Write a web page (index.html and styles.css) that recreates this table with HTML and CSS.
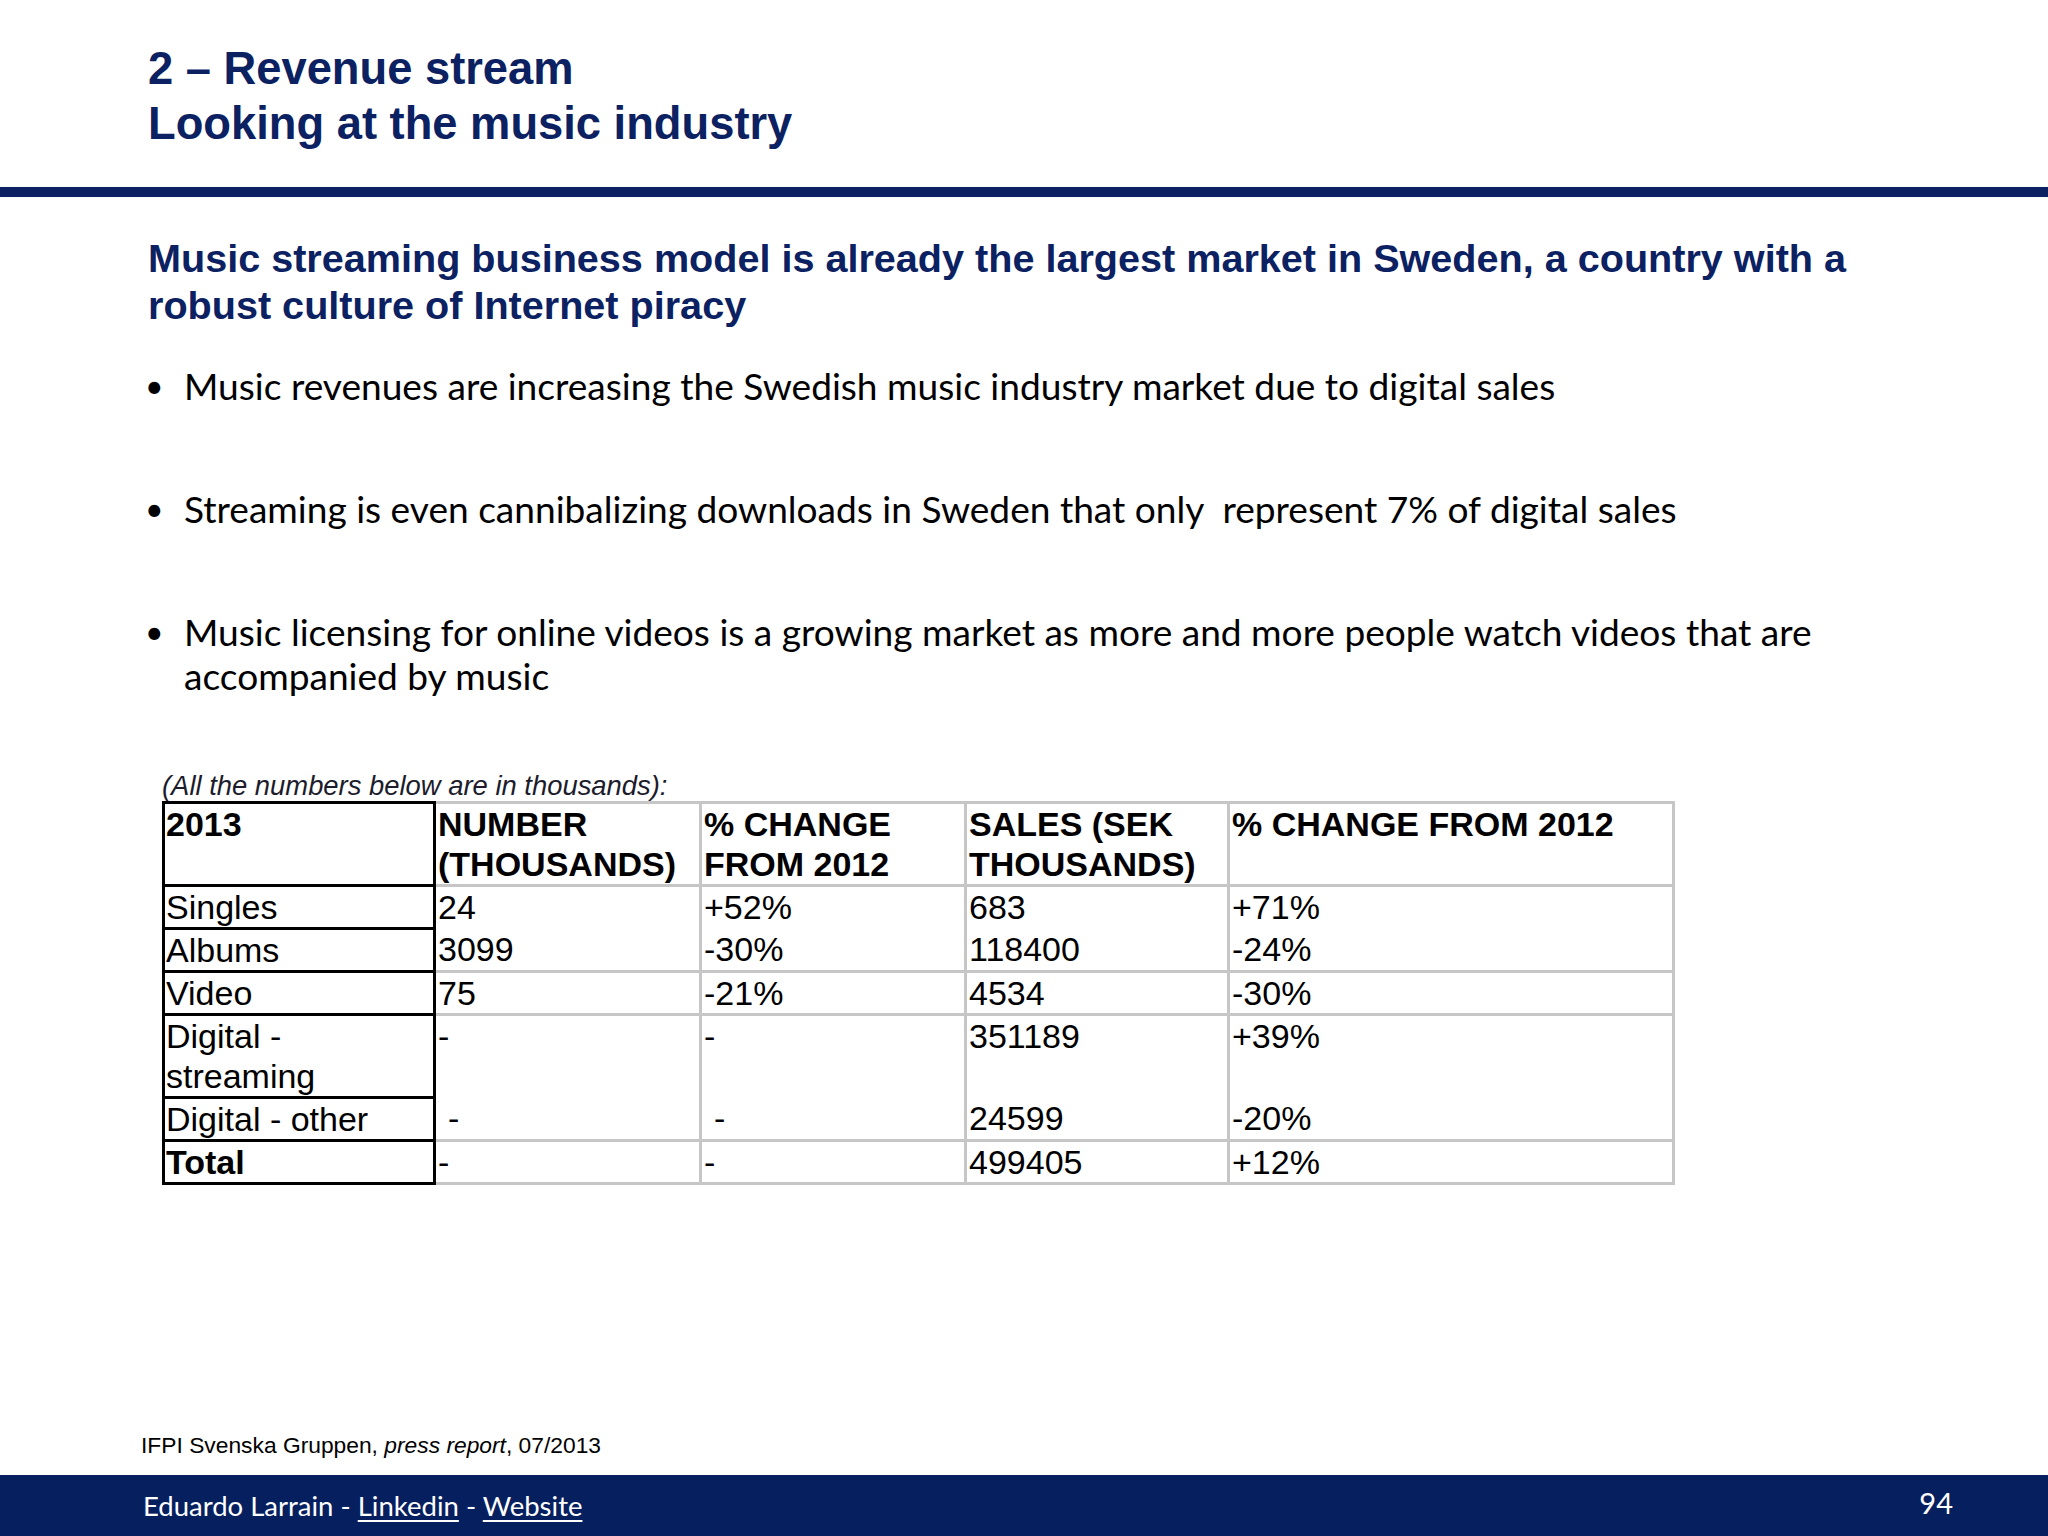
FILE: index.html
```html
<!DOCTYPE html>
<html lang="en">
<head>
<meta charset="utf-8">
<title>2 – Revenue stream</title>
<link rel="stylesheet" href="styles.css">
</head>
<body>
<div class="slide">
  <header class="header">
    <h1 class="title">2 – Revenue stream<br>Looking at the music industry</h1>
  </header>
  <div class="rule"></div>
  <h2 class="subtitle">Music streaming business model is already the largest market in Sweden, a country with a robust culture of Internet piracy</h2>
  <ul class="bullets">
    <li><span class="dot">•</span><span class="btext">Music revenues are increasing the Swedish music industry market due to digital sales</span></li>
    <li><span class="dot">•</span><span class="btext">Streaming is even cannibalizing downloads in Sweden that only&nbsp; represent 7% of digital sales</span></li>
    <li><span class="dot">•</span><span class="btext">Music licensing for online videos is a growing market as more and more people watch videos that are accompanied by music</span></li>
  </ul>
  <div class="tablewrap">
    <p class="caption">(All the numbers below are in thousands):</p>
    <table class="data">
      <colgroup>
        <col class="c1"><col class="c2"><col class="c3"><col class="c4"><col class="c5">
      </colgroup>
      <tr class="head">
        <td class="first">2013</td>
        <td>NUMBER<br>(THOUSANDS)</td>
        <td>% CHANGE<br>FROM 2012</td>
        <td>SALES (SEK<br>THOUSANDS)</td>
        <td>% CHANGE FROM 2012</td>
      </tr>
      <tr>
        <td class="first">Singles</td>
        <td class="openb">24</td>
        <td class="openb">+52%</td>
        <td class="openb">683</td>
        <td class="openb">+71%</td>
      </tr>
      <tr>
        <td class="first">Albums</td>
        <td>3099</td>
        <td>-30%</td>
        <td>118400</td>
        <td>-24%</td>
      </tr>
      <tr>
        <td class="first">Video</td>
        <td>75</td>
        <td>-21%</td>
        <td>4534</td>
        <td>-30%</td>
      </tr>
      <tr class="tall">
        <td class="first">Digital -<br>streaming</td>
        <td class="openb">-</td>
        <td class="openb">-</td>
        <td class="openb">351189</td>
        <td class="openb">+39%</td>
      </tr>
      <tr>
        <td class="first">Digital - other</td>
        <td class="indent">-</td>
        <td class="indent">-</td>
        <td>24599</td>
        <td>-20%</td>
      </tr>
      <tr>
        <td class="first strong">Total</td>
        <td>-</td>
        <td>-</td>
        <td>499405</td>
        <td>+12%</td>
      </tr>
    </table>
  </div>
  <p class="source">IFPI Svenska Gruppen, <em>press report</em>, 07/2013</p>
  <footer class="footer">
    <span class="author">Eduardo Larrain - <span class="link">Linkedin</span> - <span class="link">Website</span></span>
    <span class="pageno">94</span>
  </footer>
</div>
</body>
</html>
```

FILE: styles.css
```css
html, body {
  margin: 0;
  padding: 0;
  background: #ffffff;
}

.slide {
  width: 2048px;
  height: 1536px;
  display: flex;
  flex-direction: column;
  background: #ffffff;
  overflow: hidden;
}

.header {
  padding: 41px 0 0 148px;
}

.title {
  margin: 0;
  font-family: "Liberation Sans", Arial, sans-serif;
  font-weight: bold;
  font-size: 45.3px;
  line-height: 55px;
  color: #0b2161;
}

.rule {
  height: 10px;
  margin-top: 36px;
  background: #0b2161;
}

.subtitle {
  margin: 38px 0 0 148px;
  width: 1780px;
  font-family: "Liberation Sans", Arial, sans-serif;
  font-weight: bold;
  font-size: 39.6px;
  line-height: 47px;
  color: #0b2161;
}

.bullets {
  list-style: none;
  margin: 35px 0 0 145px;
  padding: 0;
  font-family: Lato, "Open Sans", sans-serif;
  font-size: 37.1px;
  line-height: 44px;
  color: #000000;
  display: flex;
  flex-direction: column;
  gap: 79px;
}

.bullets li {
  display: flex;
  width: 1700px;
}

.dot {
  flex: 0 0 39px;
  font-size: 32px;
}

.btext {
  flex: 1;
}

.tablewrap {
  margin: 73px 0 0 162px;
}

.caption {
  margin: 0;
  font-family: "Liberation Sans", Arial, sans-serif;
  font-style: italic;
  font-size: 27.4px;
  line-height: 30px;
  color: #1c1c2c;
}

.data {
  border-collapse: collapse;
  table-layout: fixed;
  width: 1510px;
  font-family: "Liberation Sans", Arial, sans-serif;
  font-size: 34px;
  line-height: 40px;
  color: #000000;
}

.c1 { width: 271px; }
.c2 { width: 266px; }
.c3 { width: 265px; }
.c4 { width: 263px; }
.c5 { width: 445px; }

.data td {
  border: 3px solid #c6c6c6;
  padding: 0 2px;
  vertical-align: top;
  text-align: left;
  white-space: nowrap;
}

.data td.first {
  border: 3px solid #000000;
  padding-left: 1px;
}

.data .head td {
  font-weight: bold;
}

.data td.strong {
  font-weight: bold;
}

.data td.openb {
  border-bottom-style: hidden;
}

.data td.first.openb {
  border-bottom-style: solid;
}

.data td.indent {
  padding-left: 12px;
}

.source {
  margin: auto 0 16px 141px;
  font-family: "Liberation Sans", Arial, sans-serif;
  font-size: 22.8px;
  line-height: 28px;
  color: #000000;
}

.source em {
  font-style: italic;
}

.footer {
  height: 61px;
  flex: 0 0 61px;
  background: #061f5f;
  color: #ffffff;
  display: flex;
  align-items: center;
  justify-content: space-between;
  padding: 0 95px 0 143px;
  font-family: Lato, "Open Sans", sans-serif;
  font-size: 27.5px;
}

.link {
  text-decoration: underline;
  text-underline-offset: 4px;
}

.pageno {
  font-size: 29px;
  margin-top: -6px;
}
```
